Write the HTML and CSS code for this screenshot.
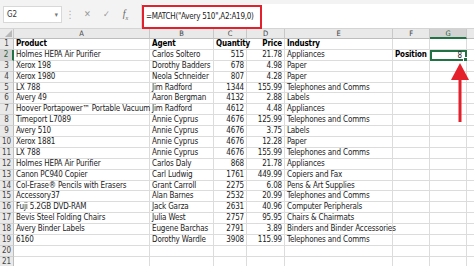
FILE: index.html
```html
<!DOCTYPE html>
<html lang="en">
<head>
  <meta charset="UTF-8">
  <title>MATCH example</title>
  <link rel="stylesheet" href="styles.css">
</head>
<body>
  <div class="app">
    <div class="formula-bar">
      <div class="name-box"><span>G2</span><span class="drop">&#9662;</span></div>
      <div class="dots">&#8942;</div>
      <div class="fbtn">&#10005;</div>
      <div class="fbtn">&#10003;</div>
      <div class="fbtn fx">f<sub>x</sub></div>
      <div class="formula-input">
        <div class="formula-text">=MATCH("Avery 510",A2:A19,0)</div>
      </div>
    </div>

    <div class="sheet" id="sheet"></div>

    <svg class="arrow" width="20" height="60" viewBox="0 0 20 60">
      <polygon points="10,0 19,17 1,17" fill="#e3202b"/>
      <rect x="8.5" y="14" width="3" height="45" fill="#e3202b"/>
    </svg>
  </div>

  <script>
    const rows = [
      ['Product', 'Agent', 'Quantity', 'Price', 'Industry'],
      ['Holmes HEPA Air Purifier', 'Carlos Soltero', '515', '21.78', 'Appliances'],
      ['Xerox 198', 'Dorothy Badders', '678', '4.98', 'Paper'],
      ['Xerox 1980', 'Neola Schneider', '807', '4.28', 'Paper'],
      ['LX 788', 'Jim Radford', '1344', '155.99', 'Telephones and Comms'],
      ['Avery 49', 'Aaron Bergman', '4132', '2.88', 'Labels'],
      ['Hoover Portapower\u2122 Portable Vacuum', 'Jim Radford', '4612', '4.48', 'Appliances'],
      ['Timeport L7089', 'Annie Cyprus', '4676', '125.99', 'Telephones and Comms'],
      ['Avery 510', 'Annie Cyprus', '4676', '3.75', 'Labels'],
      ['Xerox 1881', 'Annie Cyprus', '4676', '12.28', 'Paper'],
      ['LX 788', 'Annie Cyprus', '4676', '155.99', 'Telephones and Comms'],
      ['Holmes HEPA Air Purifier', 'Carlos Daly', '868', '21.78', 'Appliances'],
      ['Canon PC940 Copier', 'Carl Ludwig', '1761', '449.99', 'Copiers and Fax'],
      ['Col-Erase\u00ae Pencils with Erasers', 'Grant Carroll', '2275', '6.08', 'Pens & Art Supplies'],
      ['Accessory37', 'Alan Barnes', '2532', '20.99', 'Telephones and Comms'],
      ['Fuji 5.2GB DVD-RAM', 'Jack Garza', '2631', '40.96', 'Computer Peripherals'],
      ['Bevis Steel Folding Chairs', 'Julia West', '2757', '95.95', 'Chairs & Chairmats'],
      ['Avery Binder Labels', 'Eugene Barchas', '2791', '3.89', 'Binders and Binder Accessories'],
      ['6160', 'Dorothy Wardle', '3908', '115.99', 'Telephones and Comms'],
      ['', '', '', '', ''],
      ['', '', '', '', '']
    ];
    const cols = ['', 'A', 'B', 'C', 'D', 'E', 'F', 'G', ''];
    const sheet = document.getElementById('sheet');

    function cell(text, cls) {
      const d = document.createElement('div');
      d.className = 'cell ' + (cls || '');
      d.textContent = text;
      sheet.appendChild(d);
      return d;
    }

    cols.forEach(function(c, i) {
      const d = cell(c, 'col-head' + (c === 'G' ? ' sel-col' : ''));
      if (i === 0) d.innerHTML = '<span class="corner"></span>';
    });

    rows.forEach(function(r, i) {
      const n = i + 1;
      cell(n, 'row-head' + (n === 2 ? ' sel-row' : ''));
      r.forEach(function(v, j) {
        let cls = (j === 2 || j === 3) ? 'num' : '';
        if (n === 1) cls += ' bold';
        cell(v, cls);
      });
      if (n === 2) {
        cell('Position', 'bold');
        const g = cell('8', 'num active');
        g.innerHTML = '8<span class="handle"></span>';
      } else {
        cell('', '');
        cell('', '');
      }
      cell('', '');
    });
  </script>
</body>
</html>
```

FILE: styles.css
```css
body {
  margin: 0;
  background-color: #fff;
  font-family: "Liberation Sans Narrow", "DejaVu Sans Condensed", "Liberation Sans", sans-serif;
  overflow: hidden;
}

.app {
  position: relative;
  width: 474px;
  height: 266px;
  overflow: hidden;
}

.formula-bar {
  display: flex;
  align-items: center;
  height: 28px;
  background-color: #f3f3f3;
  padding-left: 3px;
  box-sizing: border-box;
}

.name-box {
  display: flex;
  justify-content: space-between;
  align-items: center;
  width: 59px;
  height: 17px;
  margin-top: 1px;
  padding: 0 3px;
  box-sizing: border-box;
  background-color: #fff;
  border: 1px solid #d8d8d8;
  font-size: 8px;
  color: #333;
}

.name-box .drop {
  font-size: 7px;
  color: #777;
}

.dots {
  width: 16px;
  text-align: center;
  color: #aaa;
  font-size: 10px;
}

.fbtn {
  width: 19px;
  text-align: center;
  color: #999;
  font-size: 9px;
}

.fx {
  font-family: "Liberation Serif", serif;
  font-style: italic;
  font-size: 10px;
  color: #666;
}

.fx sub {
  font-size: 6px;
}

.formula-input {
  flex: 1;
  align-self: stretch;
  margin-top: 4px;
  background-color: #fff;
  border-left: 1px solid #d8d8d8;
  margin-left: 6px;
}

.formula-text {
  width: 120px;
  height: 24px;
  margin-top: 1px;
  box-sizing: border-box;
  border: 2px solid #e3202b;
  font-size: 8px;
  letter-spacing: -0.25px;
  line-height: 20px;
  padding-left: 2px;
  color: #222;
  white-space: nowrap;
  overflow: hidden;
}

.sheet {
  display: grid;
  grid-template-columns: 14px 136px 64px 33px 38px 108px 37px 37px 20px;
  grid-template-rows: 10px repeat(21, 10.9px);
  border-top: 1px solid #d4d4d4;
}

.cell {
  border-right: 1px solid #dcdcdc;
  border-bottom: 1px solid #dcdcdc;
  box-sizing: border-box;
  font-size: 8px;
  letter-spacing: -0.15px;
  line-height: 10px;
  padding: 0 2px;
  white-space: nowrap;
  overflow: visible;
  color: #222;
  position: relative;
}

.num {
  text-align: right;
}

.bold {
  font-weight: bold;
  color: #000;
}

.col-head {
  background-color: #e9e9e9;
  border-right-color: #c8c8c8;
  border-bottom-color: #bdbdbd;
  text-align: center;
  color: #444;
  font-size: 7.5px;
  line-height: 9px;
}

.corner {
  position: absolute;
  right: 1px;
  bottom: 1px;
  width: 0;
  height: 0;
  border-left: 7px solid transparent;
  border-bottom: 7px solid #b8b8b8;
}

.row-head {
  background-color: #e9e9e9;
  border-right-color: #bdbdbd;
  border-bottom-color: #d0d0d0;
  text-align: center;
  color: #444;
  padding: 0;
}

.sel-col {
  background-color: #d3d3d3;
  border-bottom: 2px solid #217346;
  color: #1e5d37;
}

.sel-row {
  background-color: #d3d3d3;
  border-right: 2px solid #217346;
  color: #1e5d37;
}

.active {
  border: 2px solid #217346;
  line-height: 7px;
  padding-right: 3px;
}

.handle {
  position: absolute;
  right: -3px;
  bottom: -3px;
  width: 3px;
  height: 3px;
  background-color: #217346;
  border: 1px solid #fff;
}

.arrow {
  position: absolute;
  left: 450px;
  top: 63px;
}
```
